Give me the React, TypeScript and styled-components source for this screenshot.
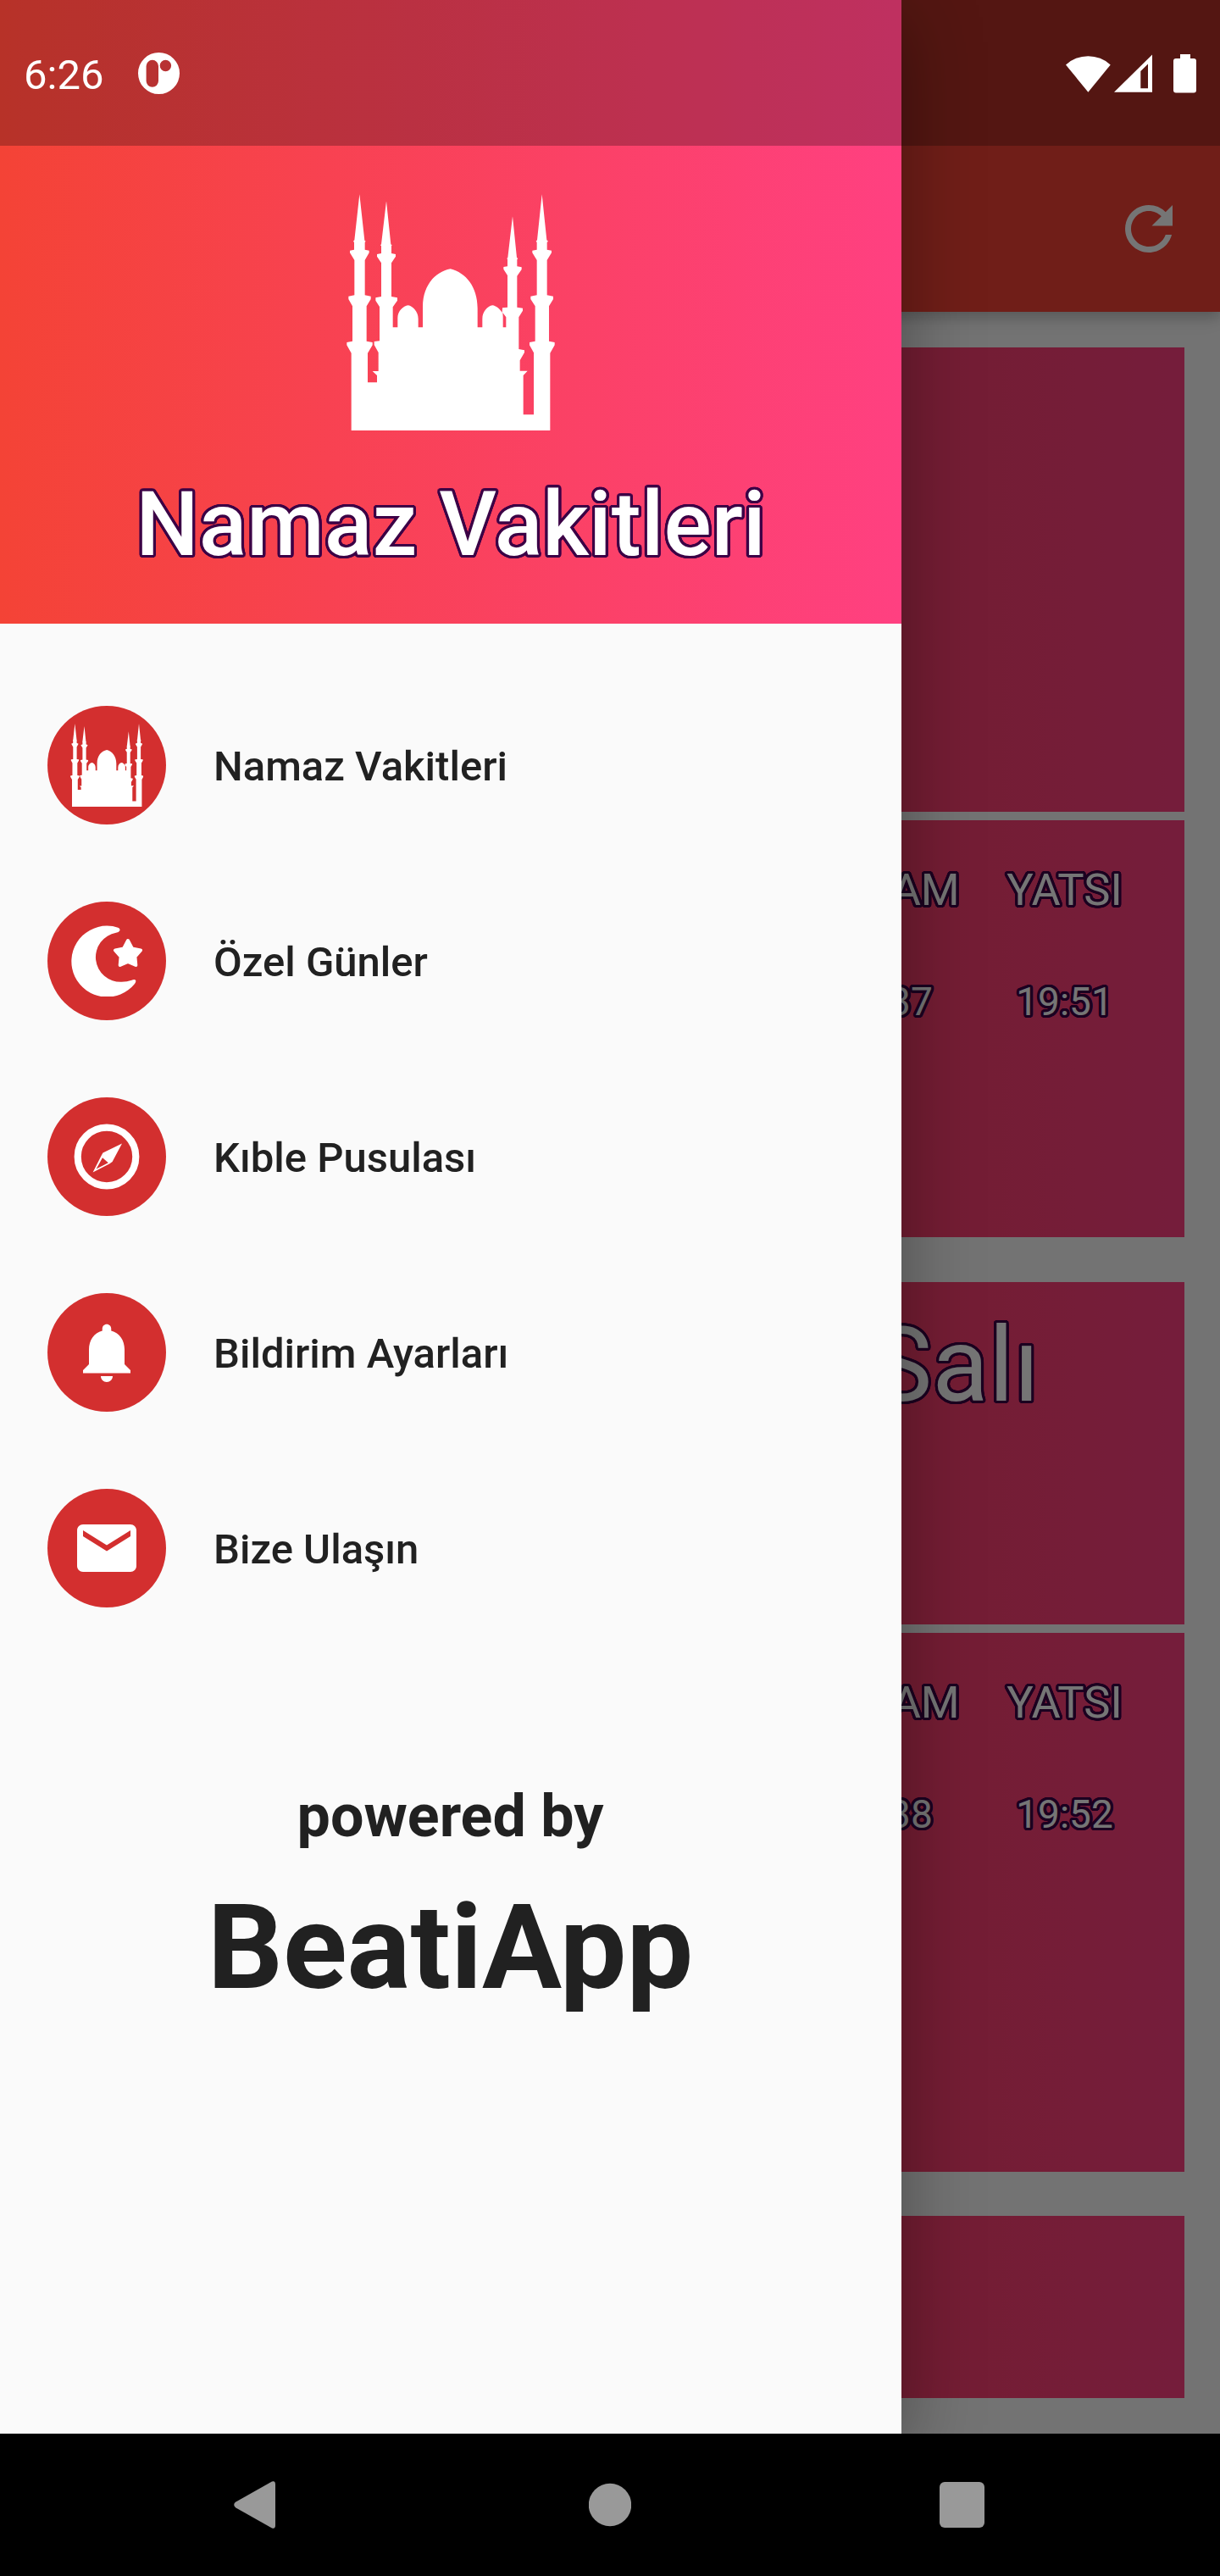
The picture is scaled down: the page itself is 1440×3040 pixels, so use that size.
import React from "react";
import styled, { createGlobalStyle } from "styled-components";

const outline = (r: number, color: string) =>
  Array.from({ length: 24 }, (_, i) => {
    const a = (i * Math.PI) / 12;
    return `${(Math.cos(a) * r).toFixed(2)}px ${(Math.sin(a) * r).toFixed(2)}px 0 ${color}`;
  }).join(", ");

const GlobalStyle = createGlobalStyle`
  * { box-sizing: border-box; }
  body { margin: 0; background: #000; font-family: Roboto, "Noto Sans", sans-serif; }
  svg { display: block; flex: none; }
`;

const Screen = styled.div`
  position: relative;
  width: 1440px;
  height: 3040px;
  display: flex;
  flex-direction: column;
  overflow: hidden;
  background: #000;
`;

const Page = styled.main`
  position: relative;
  height: 2872px;
  display: flex;
  flex-direction: column;
  overflow: hidden;
  background: #fafafa;
`;

const AppBar = styled.header`
  position: relative;
  flex: none;
  height: 368px;
  padding: 172px 42px 0;
  display: flex;
  align-items: center;
  justify-content: flex-end;
  color: #fff;
  background: #f44336;
  box-shadow: 0 7px 14px rgba(0, 0, 0, 0.18), 0 3px 28px rgba(0, 0, 0, 0.08);
`;

const CardList = styled.div`
  flex: 1;
  display: flex;
  flex-direction: column;
  padding: 42px;
`;

const Card = styled.section<{ $gap: number }>`
  display: flex;
  flex-direction: column;
  flex: none;
  margin-bottom: ${(p) => p.$gap}px;
`;

const CardPanel = styled.div<{ $height: number }>`
  height: ${(p) => p.$height}px;
  display: flex;
  justify-content: flex-end;
  background: linear-gradient(90deg, #f44336, #ff4081);
`;

const Divider = styled.div`
  height: 10px;
  background: #fafafa;
`;

const DayName = styled.h2`
  margin: 0;
  padding: 37px 171px 0 0;
  font-size: 122.5px;
  font-weight: 400;
  line-height: 1;
  color: #fff;
  text-shadow: ${outline(3.2, "#3c0046")};
`;

const Times = styled.div`
  display: grid;
  grid-template-columns: 217px 209px;
  padding: 56px 37px 0 0;
`;

const TimeColumn = styled.div`
  display: flex;
  flex-direction: column;
  align-items: center;
  gap: 82px;
  color: #fff;
  line-height: 1;
  text-shadow: ${outline(3.2, "#3c0046")};
`;

const TimeLabel = styled.span`
  font-size: 52.5px;
`;

const TimeValue = styled.span`
  font-size: 46px;
`;

const Scrim = styled.div`
  position: absolute;
  inset: 0 0 168px 0;
  overflow: hidden;
  background: rgba(0, 0, 0, 0.54);
`;

const Drawer = styled.aside`
  width: 1064px;
  height: 100%;
  display: flex;
  flex-direction: column;
  background: #fafafa;
  box-shadow: 0 20px 84px rgba(0, 0, 0, 0.35);
`;

const DrawerHeader = styled.div`
  height: 736px;
  flex: none;
  padding-top: 229px;
  display: flex;
  flex-direction: column;
  align-items: center;
  gap: 59px;
  color: #fff;
  background: linear-gradient(90deg, #f44336, #ff4081);
`;

const DrawerTitle = styled.h1`
  margin: 0;
  font-size: 105px;
  font-weight: 500;
  line-height: 1;
  text-shadow: ${outline(3.2, "#3c0046")};
`;

const Menu = styled.nav`
  display: flex;
  flex-direction: column;
  gap: 91px;
  padding: 97px 56px 0;
`;

const MenuItem = styled.a`
  display: flex;
  align-items: center;
  gap: 56px;
  height: 140px;
`;

const MenuLabel = styled.span`
  padding-top: 2px;
  font-size: 49px;
  font-weight: 500;
  line-height: 1;
  color: #212121;
`;

const Avatar = styled.span`
  width: 140px;
  height: 140px;
  border-radius: 50%;
  display: flex;
  align-items: center;
  justify-content: center;
  color: #fff;
  background: #d32f2f;
`;

const Credits = styled.footer`
  display: flex;
  flex-direction: column;
  align-items: center;
  gap: 50px;
  padding: 211px 1px 0 0;
  font-weight: 700;
  line-height: 1;
  color: #212121;
`;

const PoweredBy = styled.span`
  font-size: 70px;
`;

const Brand = styled.span`
  font-size: 140px;
`;

const StatusBar = styled.div`
  position: absolute;
  top: 0;
  left: 0;
  width: 100%;
  height: 172px;
  padding: 1px 28px 0;
  display: flex;
  align-items: center;
  justify-content: space-between;
  color: #fff;
  background: rgba(0, 0, 0, 0.25);
`;

const StatusGroup = styled.div<{ $gap: number }>`
  display: flex;
  align-items: center;
  gap: ${(p) => p.$gap}px;
`;

const Clock = styled.span`
  padding-top: 3px;
  font-size: 49px;
  line-height: 1;
`;

const NavBar = styled.div`
  height: 168px;
  display: grid;
  grid-template-columns: 601px 238px 601px;
  align-items: center;
  color: #999;
  background: #000;
`;

const NavKey = styled.div<{ $side?: "left" | "right" }>`
  display: flex;
  justify-content: ${(p) => (p.$side === "left" ? "flex-end" : p.$side === "right" ? "flex-start" : "center")};
  padding: ${(p) => (p.$side === "left" ? "0 276px 0 0" : p.$side === "right" ? "0 0 0 269.5px" : "0")};
`;

const MosqueIcon = ({ width }: { width: number }) => (
  <svg width={width} height={(width * 838) / 738} viewBox="87 56 738 838" fill="currentColor">
    <path
      d="M133 57L151 220L155 223L152 227V253L167 256V264L152 290V414L173 418V428L158 453V577L179 581V591L162 619V723H195V698L179 683H200V617L185 590V578L204 576V455L190 433V423L210 419V300L195 277V269L210 266V240L207 237L210 234L228 81L244 234L248 237L246 240V266L261 269V277L246 300V419L267 423V433L251 456V528H268V495C268 470 288 453 305 450C322 453 341 472 341 498V528H357V455C357 380 400 332 455 321C510 335 551 385 551 460V528H568V498C568 472 586 453 604 450C616 452 630 462 638 476L639 459L657 457V344L643 322V314L657 312V287L655 284L658 281L675 135L690 281L694 284L691 288V312L707 315V323L691 346V457L711 460V469L697 492V605L717 609V617L701 645V682H728L713 698V837H750V618L735 591V581L755 577V453L739 428V418L761 414V290L745 264V256L761 253V227L758 223L762 219L779 57L796 219L801 223L797 227V253L813 256V264L797 290V414L819 418V428L804 453V577L824 581V591L808 619V893H104V619L88 591V581L108 577V453L94 428V418L115 414V290L99 264V256L114 253V227L111 223L115 219Z M641 490V528H652V492L640 476Z"
      fillRule="evenodd"
    />
  </svg>
);

const CrescentIcon = () => (
  <svg width="84" height="84" viewBox="0 0 84 84" fill="currentColor">
    <path d="M55.3 2.8Q58.4 4 57.2 6.5Q56.2 8.2 53 8.7A29.3 29.3 0 0 0 59.5 66.8Q66 66.8 71.5 64.7Q75.3 63 76.3 65.3Q76.6 66.6 75 69A42 42 0 1 1 42.2 0.6Q49.5 .6 55.3 2.8Z" />
    <path
      d="M67 18L72 27.4L82 29.4L75.4 37L76.3 47L67 43L57.7 47L58.6 37L52 29.4L62 27.4Z"
      stroke="currentColor"
      strokeWidth="4"
      strokeLinejoin="round"
    />
  </svg>
);

const CompassIcon = () => (
  <svg width="78" height="78" viewBox="-39 -39 78 78" fill="none">
    <circle r="34.3" stroke="currentColor" strokeWidth="8.2" />
    <path
      fill="currentColor"
      fillRule="evenodd"
      d="M18 -15.5L6.6 6L3.5 8.2L-16.4 18.4L-6.5 -1L-4.6 -4.4ZM-5 1.2L-12.4 14.6L1.8 7.2Z"
    />
  </svg>
);

const GlyphIcon = ({ d }: { d: string }) => (
  <svg width="84" height="84" viewBox="0 0 24 24" fill="currentColor">
    <path d={d} />
  </svg>
);

const REFRESH =
  "M17.65 6.35A7.958 7.958 0 0 0 12 4c-4.42 0-7.99 3.58-7.99 8s3.57 8 7.99 8c3.73 0 6.84-2.55 7.73-6h-2.08A5.99 5.99 0 0 1 12 18c-3.31 0-6-2.69-6-6s2.69-6 6-6c1.66 0 3.14.69 4.22 1.78L13 11h7V4l-2.35 2.35z";
const BELL =
  "M12 22c1.1 0 2-.9 2-2h-4c0 1.1.89 2 2 2zm6-6v-5c0-3.07-1.64-5.64-4.5-6.32V4c0-.83-.67-1.5-1.5-1.5s-1.5.67-1.5 1.5v.68C7.63 5.36 6 7.92 6 11v5l-2 2v1h16v-1l-2-2z";
const MAIL =
  "M20 4H4c-1.1 0-1.99.9-1.99 2L2 18c0 1.1.9 2 2 2h16c1.1 0 2-.9 2-2V6c0-1.1-.9-2-2-2zm0 4l-8 5-8-5V6l8 5 8-5v2z";

const menu = [
  { label: "Namaz Vakitleri", icon: <MosqueIcon width={86.4} /> },
  { label: "Özel Günler", icon: <CrescentIcon /> },
  { label: "Kıble Pusulası", icon: <CompassIcon /> },
  { label: "Bildirim Ayarları", icon: <GlyphIcon d={BELL} /> },
  { label: "Bize Ulaşın", icon: <GlyphIcon d={MAIL} /> },
];

const PrayerTimes = ({ items }: { items: [string, string][] }) => (
  <Times>
    {items.map(([label, value]) => (
      <TimeColumn key={label}>
        <TimeLabel>{label}</TimeLabel>
        <TimeValue>{value}</TimeValue>
      </TimeColumn>
    ))}
  </Times>
);

export default function App() {
  return (
    <Screen>
      <GlobalStyle />
      <Page>
        <AppBar>
          <GlyphIcon d={REFRESH} />
        </AppBar>
        <CardList>
          <Card $gap={53}>
            <CardPanel $height={548} />
            <Divider />
            <CardPanel $height={492}>
              <PrayerTimes items={[["AKŞAM", "18:37"], ["YATSI", "19:51"]]} />
            </CardPanel>
          </Card>
          <Card $gap={52}>
            <CardPanel $height={404}>
              <DayName>Salı</DayName>
            </CardPanel>
            <Divider />
            <CardPanel $height={636}>
              <PrayerTimes items={[["AKŞAM", "18:38"], ["YATSI", "19:52"]]} />
            </CardPanel>
          </Card>
          <Card $gap={0}>
            <CardPanel $height={215} />
          </Card>
        </CardList>
      </Page>

      <NavBar>
        <NavKey $side="left">
          <svg width="49" height="56" viewBox="0 0 49 56" fill="currentColor">
            <path d="M45 .6Q49-1 49 4V52Q49 57 45 55.4L2 31.2Q-1.6 28 2 24.8Z" />
          </svg>
        </NavKey>
        <NavKey>
          <svg width="50" height="52" viewBox="0 0 50 52" fill="currentColor">
            <circle cx="25" cy="26" r="25.2" />
          </svg>
        </NavKey>
        <NavKey $side="right">
          <svg width="53" height="54" viewBox="0 0 53 54" fill="currentColor">
            <rect width="53" height="54" rx="6" />
          </svg>
        </NavKey>
      </NavBar>

      <Scrim>
        <Drawer>
          <DrawerHeader>
            <MosqueIcon width={246} />
            <DrawerTitle>Namaz Vakitleri</DrawerTitle>
          </DrawerHeader>
          <Menu>
            {menu.map((m) => (
              <MenuItem key={m.label}>
                <Avatar>{m.icon}</Avatar>
                <MenuLabel>{m.label}</MenuLabel>
              </MenuItem>
            ))}
          </Menu>
          <Credits>
            <PoweredBy>powered by</PoweredBy>
            <Brand>BeatiApp</Brand>
          </Credits>
        </Drawer>
      </Scrim>

      <StatusBar>
        <StatusGroup $gap={41}>
          <Clock>6:26</Clock>
          <svg width="49" height="49" viewBox="0 0 49 49">
            <path
              fill="currentColor"
              fillRule="evenodd"
              d="M24.5 0A24.5 24.5 0 1 1 24.5 49A24.5 24.5 0 1 1 24.5 0ZM16.8 8.8A7.2 7.2 0 0 0 9.6 16V33.6A7.2 7.2 0 0 0 24 33.6V16A7.2 7.2 0 0 0 16.8 8.8ZM32.4 8.8A6.7 6.7 0 1 0 32.4 22.2A6.7 6.7 0 1 0 32.4 8.8Z"
            />
          </svg>
        </StatusGroup>
        <StatusGroup $gap={0}>
          <svg width="154" height="46" viewBox="0 0 154 46" fill="currentColor">
            <path d="M0 12.4A39 39 0 0 1 52.7 12.4L26.4 44.8Z" />
            <path fillRule="evenodd" d="M57 44.8L102 .5V44.8ZM88.3 20V40.2H97V11.6Z" />
            <path d="M135 0H147V5H151Q154 5 154 8V42.6Q154 45.6 151 45.6H130Q127 45.6 127 42.6V8Q127 5 130 5H135Z" />
          </svg>
        </StatusGroup>
      </StatusBar>
    </Screen>
  );
}
